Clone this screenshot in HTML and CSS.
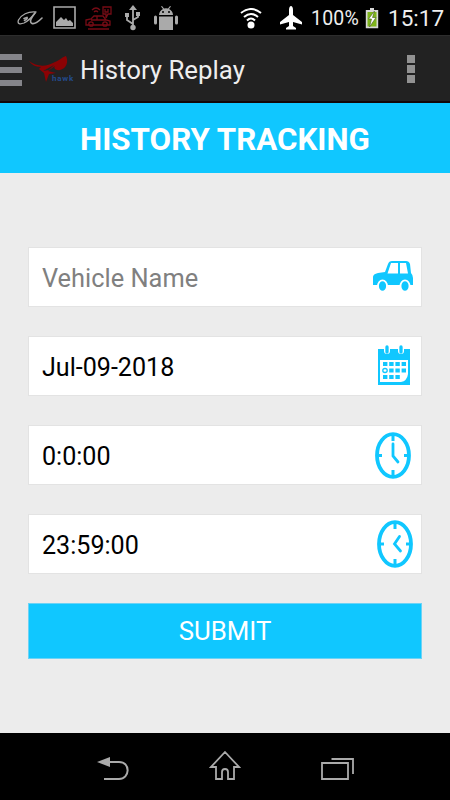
FILE: index.html
```html
<!DOCTYPE html>
<html lang="en">
  <head>
    <meta charset="UTF-8" />
    <meta name="viewport" content="width=device-width, initial-scale=1.0" />
    <title>History Replay</title>
    <link rel="stylesheet" href="styles.css">
  </head>
  <body>
    <div class="status-bar">
      <div class="notifications">
        <svg width="26" height="14" viewBox="0 0 26 14" fill="none" stroke="#a8a8a8" stroke-linecap="round">
          <path d="M19 1C11 0 4 4 1.500 9C0 13 3 13.500 7 12C11 10 15 6 18 2" stroke-width="1.3" />
          <path d="M7 7.500L10 6.500C11 8 8 9 7.500 9.500M18 2C14 7 12 11 15 12.500C18 13.500 22 10 25 7" stroke-width="1.6" />
        </svg>
        <svg class="picture" width="24" height="24" viewBox="0 0 24 24">
          <path d="M1 1H22V22H1Z" fill="none" stroke="#aaa" stroke-width="1.6" />
          <path d="M3 20V16L8 11L11 14L13 12L15 15L17 14L20 17V20Z" fill="#aaa" />
        </svg>
        <svg class="tracker" width="27" height="24" viewBox="0 0 27 24" fill="none" stroke="#760b15" stroke-width="1.3">
          <path d="M1 14L6 13L9 10H18L21 14L25 15V19H1ZM12 10V14M6 14H21" />
          <circle cx="6" cy="18" r="2.2" />
          <circle cx="20" cy="18" r="2.2" />
          <path d="M18 1H26V8H23L21 12V8H18ZM20 3V6H23V3M7 4Q11 0 15 4M9 6Q11 4 13 6M3 23H24" />
        </svg>
        <svg class="usb" width="15" height="26" viewBox="0 0 15 26" fill="none" stroke="#aaa" stroke-width="1.8">
          <path d="M8 4V21M8 19L2 15V10M8 15L13 12V8" />
          <path d="M8 0L12 5H4Z" fill="#aaa" stroke="none" />
          <circle cx="8" cy="22.5" r="2.7" fill="#aaa" stroke="none" />
          <path d="M0 8H4V12H0ZM11 7H15V11H11Z" fill="#aaa" stroke="none" />
        </svg>
        <svg class="android" width="26" height="25" viewBox="0 0 26 25" fill="#aaa">
          <path d="M6 9C6 6 8 4 10 3L8 .5L9 0L11 2.5Q13 2 15 2.5L17 0L18 .5L16 3C18 4 20 6 20 9ZM6 10.500H20V24H6Z" />
          <path d="M2.500 11V17M23.500 11V17" stroke="#aaa" stroke-width="3" stroke-linecap="round" />
          <circle cx="10" cy="6" r="1" fill="#000" />
          <circle cx="16" cy="6" r="1" fill="#000" />
        </svg>
      </div>
      <div class="system">
        <svg width="22" height="21" viewBox="0 0 22 21" fill="none" stroke="#fff" stroke-width="2">
          <path d="M1 5Q11 -3 21 5M4 9Q11 3 18 9M7 12.500Q11 8.500 15 12.500" />
          <circle cx="11" cy="17" r="3.5" fill="#fff" stroke="none" />
        </svg>
        <svg class="plane" width="24" height="24" viewBox="0 0 24 24" fill="#fff">
          <path d="M12 0C13 0 14 1.500 14 4V9L23 16V18.500L14 16V20L17 22V23.500H7V22L10 20V16L1 18.500V16L10 9V4C10 1.500 11 0 12 0Z" />
        </svg>
        <span class="percent">100%</span>
        <svg class="battery" width="14" height="21" viewBox="0 0 14 21">
          <path d="M5 0H9V2H13.200V20.200H.8V2H5Z" fill="#d8d8d8" />
          <path d="M2.500 4H11.500V18.500H2.500Z" fill="#7eb51b" />
          <path d="M9.500 3L3.500 11H6.500L4.500 19L11 9.500H7.500Z" fill="#fff" stroke="#445b20" stroke-width=".6" />
        </svg>
        <span class="clock">15:17</span>
      </div>
    </div>

    <div class="action-bar">
      <div class="menu">
        <span></span>
        <span></span>
        <span></span>
      </div>
      <svg class="logo" width="46" height="28" viewBox="0 0 46 28">
        <path d="M0 5C8 11 17 11 26 6C31 4 35 0 37 0C40 6 37 13 31 14C27 15 24 12 26 10L19 15L27 17L20 18L17 26L15 17L10 13L12 11C6 11 2 8 0 5Z" fill="#8c0204" />
        <path d="M14 15L25 9L20 14Z" fill="#222" />
        <text class="logo-text" x="23" y="25">hawk</text>
      </svg>
      <span class="app-title">History Replay</span>
      <div class="overflow">
        <span></span>
        <span></span>
        <span></span>
      </div>
    </div>

    <h1 class="page-title">HISTORY TRACKING</h1>

    <form class="history-form">
      <div class="field">
        <span class="value placeholder">Vehicle Name</span>
        <svg width="42" height="34" viewBox="0 0 42 34">
          <path d="M1 17Q1 14 6 13L13 12L16 4Q17 1 20 1H34Q37 1 38 4L39 13Q41 15 41 18V25H1Z" fill="#10c7ff" />
          <path d="M15.500 13.500L19 3H26V13.500ZM28 3H34L36 13.500H28Z" fill="#fff" />
          <ellipse cx="10.500" cy="26" rx="4.500" ry="5.700" fill="#10c7ff" stroke="#fff" stroke-width="1.800" />
          <ellipse cx="33" cy="26" rx="4.500" ry="5.700" fill="#10c7ff" stroke="#fff" stroke-width="1.800" />
        </svg>
      </div>
      <div class="field">
        <span class="value">Jul-09-2018</span>
        <svg class="calendar" width="34" height="41" viewBox="0 0 34 41">
          <path d="M1 4H33V40H1Z" fill="#10c7ff" />
          <path d="M3 15H31V29Q30 36 24 37H3Z" fill="#fff" />
          <path d="M7 3A3 3 0 0 1 13 3V6A3 3 0 0 1 7 6ZM21 3A3 3 0 0 1 27 3V6A3 3 0 0 1 21 6Z" fill="#fff" />
          <path d="M10 2V7M24 2V7" stroke="#10c7ff" stroke-width="3.300" stroke-linecap="round" />
          <path d="M6 19H29M12.200 25.500H29M6 32H24" stroke="#10c7ff" stroke-width="4.200" stroke-dasharray="4.400 1.800" />
          <ellipse cx="8" cy="25.500" rx="2.200" ry="2" fill="#fff" stroke="#10c7ff" stroke-width="1.300" />
        </svg>
      </div>
      <div class="field">
        <span class="value">0:0:00</span>
        <svg class="start-clock" width="36" height="47" viewBox="0 0 36 47" fill="none" stroke="#10c7ff">
          <ellipse cx="18" cy="23.500" rx="16" ry="21.300" stroke-width="3.800" />
          <path d="M18 3V9M18 38V44M2 23.500H7M29 23.500H34" stroke-width="3" />
          <path d="M18 12V24L23 30" stroke-width="2.800" stroke-linecap="round" />
        </svg>
      </div>
      <div class="field">
        <span class="value">23:59:00</span>
        <svg class="end-clock" width="36" height="48" viewBox="0 0 36 48" fill="none" stroke="#10c7ff">
          <ellipse cx="18" cy="24" rx="16" ry="21.800" stroke-width="3.800" />
          <path d="M18 3V9M18 39V45M2 24H7M29 24H34" stroke-width="3" />
          <path d="M22.500 16.500L17.500 24L23.500 31" stroke-width="2.800" stroke-linecap="round" />
        </svg>
      </div>
      <button type="button" class="submit">SUBMIT</button>
    </form>

    <div class="nav-bar">
      <svg width="32" height="24" viewBox="0 0 32 24" fill="none" stroke="#aaa" stroke-width="2">
        <path d="M12 5H22C34 5 33 22 22 22H7" />
        <path d="M0 5L13 0V10Z" fill="#aaa" stroke="none" />
      </svg>
      <svg class="home" width="32" height="31" viewBox="0 0 32 31" fill="none" stroke="#aaa" stroke-width="1.800">
        <path d="M16 2L30 17H25V29H19V22Q19 19 16 19Q13 19 13 22V29H7V17H2Z" />
      </svg>
      <svg width="33" height="24" viewBox="0 0 33 24" fill="none" stroke="#aaa" stroke-width="1.800">
        <path d="M1 6H27V22H1ZM10.500 2H32V17" />
      </svg>
    </div>
  </body>
</html>
```
FILE: styles.css
```css
* {
  margin: 0;
  padding: 0;
  box-sizing: border-box;
}

body {
  display: flex;
  flex-direction: column;
  height: 100vh;
  overflow: hidden;
  background-color: #ececec;
  font-family: Roboto, "Noto Sans", sans-serif;
}

svg {
  display: block;
  flex-shrink: 0;
}

.status-bar {
  display: flex;
  justify-content: space-between;
  height: 35px;
  padding: 1px 9px 0 17px;
  background-color: #000;
}

.notifications,
.system {
  display: flex;
  align-items: center;
}

.picture {
  margin-left: 10px;
}

.tracker {
  margin-left: 8px;
}

.usb {
  margin-left: 13px;
}

.android {
  margin-left: 13px;
}

.system {
  color: #eee;
}

.plane {
  margin-left: 17px;
}

.percent {
  width: 54px;
  padding-left: 8px;
  font-size: 19.5px;
  letter-spacing: 0.2px;
}

.battery {
  margin-left: 8px;
}

.clock {
  width: 53px;
  margin-left: 9px;
  font-size: 22.5px;
  white-space: nowrap;
}

.action-bar {
  display: flex;
  align-items: center;
  height: 68px;
  padding: 2px 35px 0 0;
  background-color: #222;
  border-top: 1px solid #2d2d2d;
  border-bottom: 2px solid #120808;
}

.menu {
  display: flex;
  flex-direction: column;
  gap: 7px;
  width: 22px;
  margin-top: 1px;
}

.menu span {
  height: 6px;
  background-color: #85858a;
}

.logo {
  margin-left: 7px;
}

.logo-text {
  fill: #244a8c;
  font-size: 8px;
  font-weight: bold;
  letter-spacing: 0.8px;
}

.app-title {
  flex: 1;
  padding-left: 5px;
  color: #eee;
  font-size: 25.8px;
  white-space: nowrap;
}

.overflow {
  display: flex;
  flex-direction: column;
  gap: 2px;
  margin-bottom: 2px;
}

.overflow span {
  width: 8px;
  height: 8px;
  background-color: #929292;
}

.page-title {
  height: 70px;
  line-height: 73px;
  background-color: #10c7ff;
  color: #fff;
  font-size: 31.3px;
  font-weight: bold;
  text-align: center;
}

.history-form {
  display: flex;
  flex: 1;
  flex-direction: column;
  gap: 30px;
  padding: 75px 28px 0;
}

.field {
  display: flex;
  align-items: center;
  justify-content: space-between;
  height: 60px;
  margin-top: -1px;
  padding: 0 7px 0 13px;
  background-color: #fff;
  border: 1px solid #e3e3e3;
}

.value {
  padding-top: 2px;
  color: #000;
  font-size: 25.1px;
}

.placeholder {
  color: #808080;
  font-size: 25.4px;
}

.calendar {
  margin: 0 3px 2px 0;
}

.start-clock {
  margin-right: 3px;
}

.end-clock {
  margin-right: 1px;
}

.submit {
  height: 56px;
  margin-top: -1px;
  background-color: #10c7ff;
  border: 1px solid #6cd3f6;
  color: #fff;
  font-family: inherit;
  font-size: 25.8px;
  cursor: pointer;
}

.nav-bar {
  display: flex;
  align-items: center;
  justify-content: space-between;
  height: 67px;
  padding: 4px 96px 0 97px;
  background-color: #000;
}

.home {
  margin-bottom: 7px;
}
```
